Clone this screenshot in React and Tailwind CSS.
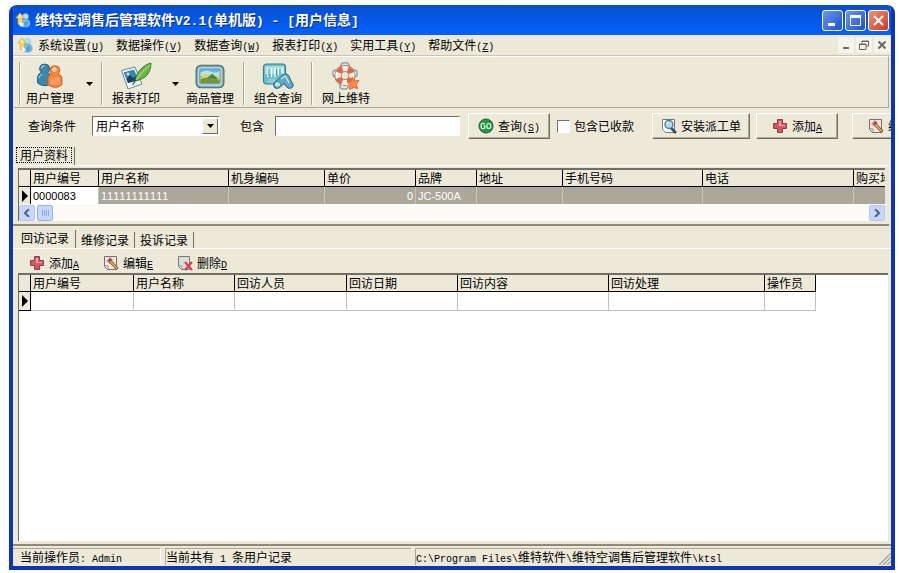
import { useState } from 'react';

const userColumns = [
    { title: '用户编号', width: 'w-[68px]' },
    { title: '用户名称', width: 'w-[130px]' },
    { title: '机身编码', width: 'w-[96px]' },
    { title: '单价', width: 'w-[91px]' },
    { title: '品牌', width: 'w-[61px]' },
    { title: '地址', width: 'w-[86px]' },
    { title: '手机号码', width: 'w-[140px]' },
    { title: '电话', width: 'w-[151px]' },
    { title: '购买地点', width: 'w-[96px]' },
];

const visitColumns = [
    { title: '用户编号', width: 'w-[103px]' },
    { title: '用户名称', width: 'w-[101px]' },
    { title: '回访人员', width: 'w-[112px]' },
    { title: '回访日期', width: 'w-[111px]' },
    { title: '回访内容', width: 'w-[151px]' },
    { title: '回访处理', width: 'w-[156px]' },
    { title: '操作员', width: 'w-[51px]' },
];

const menus = [
    ['系统设置', 'U'],
    ['数据操作', 'V'],
    ['数据查询', 'W'],
    ['报表打印', 'X'],
    ['实用工具', 'Y'],
    ['帮助文件', 'Z'],
];

// Half-width text, drawn smaller so two letters take one Chinese character
function Half({ children }) {
    return <span className="font-['Liberation_Mono',monospace] text-[10px] leading-none whitespace-pre">{children}</span>;
}

function Key({ children }) {
    return <Half><span className="underline underline-offset-1">{children}</span></Half>;
}

function AppIcon() {
    return (
        <svg viewBox="0 0 16 16" className="size-4 shrink-0" aria-hidden="true">
            <circle cx="10.500" cy="4.500" r="3" fill="#b4e0f8" stroke="#6db3dd" strokeWidth=".6" />
            <path d="M6.500 14V10q0-3 4-3t4.500 3v3l-2 2H8z" fill="#7cc0ee" stroke="#4b94cc" strokeWidth=".6" />
            <path d="M8 13q1-4 5-4v4l-2 1.500z" fill="#4fa3e0" />
            <path d="M5 1 .8 6H3v6l2 1.500L7.500 12V6h2z" fill="#f5d366" stroke="#d3a638" strokeWidth=".6" />
            <path d="M5 2.500 3 5.500h3.500z" fill="#fdf6c8" />
            <path d="M5 14.500V10l3.500 1.500v3z" fill="#e3f5fd" />
        </svg>
    );
}

function UsersIcon() {
    return (
        <svg viewBox="0 0 26 26" className="size-7" aria-hidden="true">
            <g stroke="#1e5878" strokeWidth=".9" strokeLinejoin="round">
                <path d="M5 9.500A4.300 4.300 0 0 1 3.500 5Q4 2 8 2t4.500 3q.3 3-1.500 4.500 2 1 2 4V20q-2 2-4 2-5 0-7.500-2.500V14q.5-3.500 3.500-4.500z" fill="#3a88ab" />
            </g>
            <path d="M5 6q0-2.500 3-2.500M3 15q0-3 3-3.500" stroke="#8cc3d8" strokeWidth="1.300" fill="none" />
            <g stroke="#c4561f" strokeWidth=".9" strokeLinejoin="round">
                <path d="M14.500 11Q12.500 9.500 13 7q.5-3.500 4.500-3.500T22 7q.3 2.500-1.500 4 3 1 3.500 4v6q-2 2.500-6 2.500t-7-2.500v-6q.5-3 3.500-4z" fill="#f9853f" />
            </g>
            <path d="M13 20q0-6 9.500-6v6.500q-4 3-9.500-.5z" fill="#ff9a58" />
            <circle cx="17" cy="7" r="2.300" fill="#ffc596" />
        </svg>
    );
}

function ReportIcon() {
    return (
        <svg viewBox="0 0 32 28" className="h-7 w-8" aria-hidden="true">
            <path d="M1.500 8.500 15 5l7 17L8 27z" fill="#f2f7fa" stroke="#6b8796" />
            <path d="M3.500 10.500 14 7.500l4.500 10.500L8 21z" fill="#3684bc" />
            <path d="m6.500 17 3.500-4 3 3 3-2 2.500 4L8 21z" fill="#1f3f5c" />
            <circle cx="8" cy="12" r="1.500" fill="#cde9f6" />
            <path d="M15 19q1-8 7-13 4-4 9-5 0 9-6 14-4 3-10 4z" fill="#6cb546" stroke="#2d7128" strokeWidth=".9" />
            <path d="M16 18q6-9 14-15" stroke="#c1e594" fill="none" />
            <path d="m16 18-3.500 5" stroke="#315c31" strokeWidth="1.200" />
        </svg>
    );
}

function PictureIcon() {
    return (
        <svg viewBox="0 0 28 26" className="h-7 w-[30px]" aria-hidden="true">
            <rect x="1" y="3" width="26" height="21" rx="4.500" fill="#7fa6ae" stroke="#3f6971" />
            <rect x="2.500" y="4.500" width="23" height="18" rx="3.500" fill="#b5cfd2" />
            <rect x="4.500" y="6.500" width="19" height="13.500" rx="1" fill="#65b8e0" stroke="#5d8890" strokeWidth=".6" />
            <path d="M5 10q5-3 10-1t8-1v5H5z" fill="#b9e3ed" />
            <path d="M5 15q4-5 8-3.500t10 1.500v6.500H5z" fill="#e0d160" />
            <path d="M5 16q5-2 8-1l10 1.500v3H5z" fill="#6c9a35" />
            <path d="m11 15 5-4 6 5z" fill="#4b8244" />
        </svg>
    );
}

function QueryIcon() {
    return (
        <svg viewBox="0 0 32 28" className="h-7 w-8" aria-hidden="true">
            <rect x="1.500" y="2" width="22" height="20" rx="3" fill="#6fbfcc" stroke="#347f91" strokeWidth="1.200" />
            <path d="M3 4h19v8H3z" fill="#a6dce2" />
            <path d="M6 6v9M9.500 6v9M13 6v9M16.500 6v7M20 6v5" stroke="#f2ffff" strokeWidth="1.300" />
            <path d="M7 7v7M14.500 7v6M18 7v5" stroke="#4597a6" />
            <path d="M6 18h7M6 20h6" stroke="#a9dce2" />
            <path d="m12 21 9-8q3-2 5 0 2 1 2 4l3 5q1 3-1.500 4-3 1-5-1l-2.500-3.500-4 4q-3 1.500-5 .5-2-1.500-1-5z" fill="#60a8c6" stroke="#28657e" />
            <ellipse cx="15.500" cy="22.500" rx="3.200" ry="3" fill="#b8e6f0" stroke="#367d98" />
            <path d="m19 17 4-3 2 3 2 4" stroke="#c6eef4" fill="none" strokeWidth="1.300" />
        </svg>
    );
}

function BuoyIcon() {
    return (
        <svg viewBox="0 0 28 28" className="size-7" aria-hidden="true">
            <g fill="none" stroke="#8ba6b4" strokeWidth="1.500">
                <rect x="9" y=".8" width="8" height="6" rx="3" />
                <rect x="20" y="8" width="5" height="7" rx="2.500" />
                <rect x="1" y="8" width="5" height="7" rx="2.500" />
                <rect x="8" y="21" width="8" height="6" rx="3" />
            </g>
            <circle cx="13" cy="13.500" r="7" fill="none" stroke="#b2573c" strokeWidth="7" />
            <circle cx="13" cy="13.500" r="7" fill="none" stroke="#f7f1ea" strokeWidth="5.600" />
            <circle cx="13" cy="13.500" r="7" fill="none" stroke="#de6a45" strokeWidth="5.600" strokeDasharray="5.500 5.496" strokeDashoffset="-2.750" />
            <path d="m20.500 15 1.500 4 5-.5-3 4 2 4-4.500-1-4 2 .5-4.500-3-3 4.500-.5z" fill="#ff8a50" stroke="#e8682c" strokeLinejoin="round" />
        </svg>
    );
}

function PlusIcon() {
    return (
        <svg viewBox="0 0 16 16" className="size-4 shrink-0" aria-hidden="true">
            <path d="M5.500 1.500h5v4h4v5h-4v4h-5v-4h-4v-5h4z" fill="#d95661" stroke="#84434c" strokeLinejoin="round" />
            <path d="M7 3h2v4h4v1H7z" fill="#f4a2a5" />
        </svg>
    );
}

function EditIcon() {
    return (
        <svg viewBox="0 0 16 16" className="size-4 shrink-0" aria-hidden="true">
            <path d="M1.500 1.500h12v13h-9l-3-3z" fill="#f5e5e1" stroke="#75706f" />
            <path d="M2 11h3v3" fill="#fff" stroke="#75706f" strokeWidth=".8" />
            <path d="m3 6 4-4 3 3-3 4z" fill="#e6929a" />
            <path d="m7 6 7.500 8" stroke="#6d4420" strokeWidth="3" />
            <path d="m7 6 7 7.500" stroke="#f0b64b" strokeWidth="1.600" />
            <path d="m5 6 2-3 2 2-3 2z" fill="#943e42" />
        </svg>
    );
}

function DeleteIcon() {
    return (
        <svg viewBox="0 0 16 16" className="size-4 shrink-0" aria-hidden="true">
            <path d="M1.500 1.500h11v13h-8l-3-3z" fill="#d6dfda" stroke="#717b76" />
            <path d="M2 11h3v3" fill="#fff" stroke="#717b76" strokeWidth=".8" />
            <path d="m8 7 7 8m0-8-7 8" stroke="#df3848" strokeWidth="2" />
        </svg>
    );
}

function LensIcon() {
    return (
        <svg viewBox="0 0 16 16" className="size-4 shrink-0" aria-hidden="true">
            <path d="M1.500 1.500h12v13h-9l-3-3z" fill="#fff" stroke="#777" />
            <path d="m10 10 5 5" stroke="#344e61" strokeWidth="2.500" />
            <circle cx="8" cy="6.500" r="4" fill="#a8dcf3" stroke="#4c7794" strokeWidth="1.300" />
            <path d="M6 6q0-2 2-2" stroke="#fff" fill="none" />
        </svg>
    );
}

function GoIcon() {
    return (
        <svg viewBox="0 0 16 16" className="size-4 shrink-0" aria-hidden="true">
            <circle cx="8" cy="8" r="7" fill="#279348" stroke="#155e2d" />
            <path d="M7 6Q3 4 3 8t4 2V8H5.500" stroke="#d9ffe0" fill="none" strokeWidth="1.200" />
            <ellipse cx="10.800" cy="8" rx="2" ry="2.500" stroke="#d9ffe0" fill="none" strokeWidth="1.200" />
        </svg>
    );
}

function DownArrow() {
    return (
        <svg viewBox="0 0 7 4" className="h-1 w-[7px]" aria-hidden="true">
            <path d="M0 0h7L3.500 4z" fill="#000" />
        </svg>
    );
}

function RowMark() {
    return (
        <svg viewBox="0 0 6 12" className="mx-auto h-3 w-1.5" aria-label="当前行">
            <path d="M0 0 6 6 0 12z" fill="#000" />
        </svg>
    );
}

function ToolButton({ icon, label, arrow }) {
    return (
        <div className="flex">
            <button className="flex w-[66px] flex-col items-center justify-end leading-4">
                {icon}
                <span>{label}</span>
            </button>
            {arrow && (
                <button aria-label={label + '选项'} className="flex w-3 items-center justify-center">
                    <DownArrow />
                </button>
            )}
        </div>
    );
}

function Divider() {
    return <div className="my-px w-0.5 shrink-0 border-l border-[#aca899] border-r border-r-white" />;
}

function RaisedButton({ children, className }) {
    return (
        <button className={`flex h-[26px] shrink-0 items-center justify-center gap-1 border border-t-white border-l-white border-r-[#716f64] border-b-[#716f64] bg-[#ece9d8] shadow-[inset_-1px_-1px_0_#aca899] ${className}`}>
            {children}
        </button>
    );
}

function FlatButton({ icon, label, hotkey }) {
    return (
        <button className="flex items-center gap-1">
            {icon}
            <span>{label}<Key>{hotkey}</Key></span>
        </button>
    );
}

function HeaderRow({ columns }) {
    return (
        <thead>
            <tr className="h-[17px]">
                <th className="w-3 border-r border-b border-black bg-[#ece9d8]" />
                {columns.map((col) => (
                    <th key={col.title} className={`${col.width} overflow-hidden border-r border-b border-black bg-[#ece9d8] pl-0.5 text-left font-normal whitespace-nowrap`}>
                        {col.title}
                    </th>
                ))}
            </tr>
        </thead>
    );
}

function UserTable() {
    const cells = ['0000083', '11111111111', '', '0', 'JC-500A', '', '', '', ''];
    return (
        <div className="mr-1 ml-[5px] border-t-2 border-l border-[#716f64] bg-white">
            <div className="overflow-hidden">
                <table className="w-[931px] table-fixed border-separate border-spacing-0 leading-4">
                    <HeaderRow columns={userColumns} />
                    <tbody>
                        <tr className="h-[17px]">
                            <td className="border-r border-black bg-[#ece9d8]"><RowMark /></td>
                            {cells.map((value, i) => (
                                <td key={i} className={`border-r border-[#c8c5b8] px-0.5 font-['Liberation_Sans',sans-serif] text-[11px] [font-kerning:none] ${i === 0 ? 'bg-white' : 'bg-[#aca899] text-white'} ${i === 3 ? 'text-right' : ''}`}>
                                    {value}
                                </td>
                            ))}
                        </tr>
                    </tbody>
                </table>
            </div>
            <div className="flex h-[17px] items-center justify-between bg-[#fbfaf7]">
                <div className="flex gap-0.5">
                    <button aria-label="向左" className="flex h-4 w-4 items-center justify-center rounded-xs border border-[#b4c8f6] bg-[#c6d6fc]">
                        <svg viewBox="0 0 8 8" className="size-2"><path d="M6 0 2 4l4 4" stroke="#4d6185" strokeWidth="2" fill="none" /></svg>
                    </button>
                    <div className="flex h-4 w-4 items-center justify-center gap-px rounded-xs border border-[#98b2ec] bg-[#c6d6fc]">
                        <i className="h-1.5 w-px bg-[#8cabe8]" />
                        <i className="h-1.5 w-px bg-[#8cabe8]" />
                        <i className="h-1.5 w-px bg-[#8cabe8]" />
                        <i className="h-1.5 w-px bg-[#8cabe8]" />
                    </div>
                </div>
                <button aria-label="向右" className="flex h-4 w-4 items-center justify-center rounded-xs border border-[#b4c8f6] bg-[#c6d6fc]">
                    <svg viewBox="0 0 8 8" className="size-2"><path d="m2 0 4 4-4 4" stroke="#4d6185" strokeWidth="2" fill="none" /></svg>
                </button>
            </div>
        </div>
    );
}

function VisitTable() {
    return (
        <div className="mr-[3px] ml-[5px] flex-1 overflow-hidden border-t-2 border-l border-[#716f64] bg-white">
            <table className="w-[797px] table-fixed border-separate border-spacing-0 leading-4">
                <HeaderRow columns={visitColumns} />
                <tbody>
                    <tr className="h-[19px]">
                        <td className="border-r border-b border-black bg-[#ece9d8]"><RowMark /></td>
                        {visitColumns.map((col) => (
                            <td key={col.title} className="border-r border-b border-[#c0c0c0]" />
                        ))}
                    </tr>
                </tbody>
            </table>
        </div>
    );
}

function TitleHalf({ children }) {
    return <span className="font-['Liberation_Mono',monospace] text-[13px] whitespace-pre">{children}</span>;
}

function TitleBar() {
    const box = 'flex size-[21px] items-center justify-center rounded-[3px] border border-white';
    return (
        <header className="flex h-[30px] items-center bg-linear-to-b from-[#0a4fc8] via-[#0558e8] to-[#0562fb] pr-0.5 pl-0.5 text-white">
            <AppIcon />
            <h1 className="ml-1 flex-1 text-[14px] font-bold whitespace-nowrap [text-shadow:1px_1px_#0a2f80]">
                维特空调售后管理软件<TitleHalf>V2.1(</TitleHalf>单机版<TitleHalf>{') - ['}</TitleHalf>用户信息<TitleHalf>]</TitleHalf>
            </h1>
            <div className="flex gap-0.5">
                <button aria-label="最小化" className={`${box} bg-linear-to-br from-[#6d95f0] to-[#1e4fd0]`}>
                    <svg viewBox="0 0 13 13" className="size-[13px]"><path d="M2 9h7v3H2z" fill="#fff" /></svg>
                </button>
                <button aria-label="最大化" className={`${box} bg-linear-to-br from-[#6d95f0] to-[#1e4fd0]`}>
                    <svg viewBox="0 0 13 13" className="size-[13px]"><path d="M1.500 2v9.500h10V2zM1 2.500h11" stroke="#fff" fill="none" /><path d="M1 1h11v3H1z" fill="#fff" /></svg>
                </button>
                <button aria-label="关闭" className={`${box} bg-linear-to-br from-[#ee9272] to-[#c8381a]`}>
                    <svg viewBox="0 0 13 13" className="size-[13px]"><path d="m2 2 9 9m0-9-9 9" stroke="#fff" strokeWidth="2" /></svg>
                </button>
            </div>
        </header>
    );
}

function MenuBar() {
    return (
        <nav className="flex h-[21px] items-center border-b border-[#c9c5b2] pl-1">
            <AppIcon />
            <div className="ml-[5px] flex flex-1 gap-3">
                {menus.map(([label, key]) => (
                    <button key={key} className="whitespace-nowrap">
                        {label}<Half>(</Half><Key>{key}</Key><Half>)</Half>
                    </button>
                ))}
            </div>
            <div className="flex gap-0.5 pr-px">
                <button aria-label="最小化子窗口" className="flex size-4 items-center justify-center bg-[#f4f3ec]">
                    <svg viewBox="0 0 10 10" className="size-2.5"><path d="M2 7h6v2H2z" fill="#6b6960" /></svg>
                </button>
                <button aria-label="还原子窗口" className="flex size-4 items-center justify-center bg-[#f4f3ec]">
                    <svg viewBox="0 0 10 10" className="size-2.5"><path d="M3 3V1h6.500v5H7M3 1.500h6M.5 4v5.500H7V4zM.5 4.500H7" stroke="#6b6960" fill="none" /></svg>
                </button>
                <button aria-label="关闭子窗口" className="flex size-4 items-center justify-center bg-[#f4f3ec]">
                    <svg viewBox="0 0 10 10" className="size-2.5"><path d="m1.500 1.500 7 7m0-7-7 7" stroke="#6b6960" strokeWidth="2" /></svg>
                </button>
            </div>
        </nav>
    );
}

function ToolBar() {
    return (
        <div className="mr-0.5 ml-px flex h-[52px] border-t border-r border-b border-t-white border-r-[#aca899] border-b-[#aca899] pt-1 pb-px pl-[5px]">
            <Divider />
            <div className="-ml-1 flex pr-1.5"><ToolButton icon={<UsersIcon />} label="用户管理" arrow /></div>
            <Divider />
            <ToolButton icon={<ReportIcon />} label="报表打印" arrow />
            <div className="-ml-1 flex"><ToolButton icon={<PictureIcon />} label="商品管理" /></div>
            <Divider />
            <ToolButton icon={<QueryIcon />} label="组合查询" />
            <Divider />
            <ToolButton icon={<BuoyIcon />} label="网上维特" />
        </div>
    );
}

function FilterBar() {
    const [field, setField] = useState('用户名称');
    const [keyword, setKeyword] = useState('');
    const [paid, setPaid] = useState(false);
    const sunken = 'h-5 border border-t-[#716f64] border-l-[#716f64] border-r-white border-b-white bg-white';

    return (
        <form onSubmit={(e) => e.preventDefault()} className="flex items-center overflow-hidden pt-[5px] pl-[15px] whitespace-nowrap">
            <label htmlFor="field" className="w-16 shrink-0">查询条件</label>
            <div className="relative shrink-0">
                <select
                    id="field"
                    value={field}
                    onChange={(e) => setField(e.target.value)}
                    className={`${sunken} w-32 appearance-none pl-[3px] leading-4 outline-none`}
                >
                    <option>用户名称</option>
                    <option>用户编号</option>
                </select>
                <span className="pointer-events-none absolute inset-y-0.5 right-0.5 flex w-4 items-center justify-center border border-t-white border-l-white border-r-[#716f64] border-b-[#716f64] bg-[#ece9d8]">
                    <DownArrow />
                </span>
            </div>
            <label htmlFor="keyword" className="ml-5 w-[35px] shrink-0">包含</label>
            <input
                id="keyword"
                type="text"
                value={keyword}
                onChange={(e) => setKeyword(e.target.value)}
                className={`${sunken} w-[185px] shrink-0 px-1 outline-none`}
            />
            <RaisedButton className="ml-2 w-[82px]">
                <GoIcon />
                <span>查询<Half>(</Half><Key>S</Key><Half>)</Half></span>
            </RaisedButton>
            <label className="ml-[7px] flex w-[95px] shrink-0 items-center gap-1">
                <input
                    type="checkbox"
                    checked={paid}
                    onChange={(e) => setPaid(e.target.checked)}
                    className="size-[13px] appearance-none border border-t-[#716f64] border-l-[#716f64] border-r-white border-b-white bg-white checked:bg-[#4d6185]"
                />
                包含已收款
            </label>
            <RaisedButton className="w-[98px]"><LensIcon /><span>安装派工单</span></RaisedButton>
            <RaisedButton className="ml-1.5 w-[82px]"><PlusIcon /><span>添加<Key>A</Key></span></RaisedButton>
            <RaisedButton className="ml-3.5 w-[82px]"><EditIcon /><span>编辑<Key>E</Key></span></RaisedButton>
        </form>
    );
}

function App() {
    const [tab, setTab] = useState('回访记录');

    return (
        <div className="flex min-h-screen flex-col bg-white pt-[5px] pr-1 pb-[3px] pl-[9px] font-['Noto_Sans_CJK_SC',sans-serif] text-[12px] leading-4 text-black">
            <div className="flex flex-1 flex-col overflow-hidden rounded-t-lg border-x-4 border-b-4 border-[#0b36b4] bg-[#ece9d8]">
                <TitleBar />
                <MenuBar />
                <ToolBar />
                <FilterBar />

                <section className="mr-0.5 border-b-2 border-[#8d8a7c] pt-2 pb-[3px]">
                    <div className="mb-0.5 flex border-b border-white pl-[3px]">
                        <button className="mb-0.5 border border-dotted border-black px-[3px] leading-[14px]">用户资料</button>
                        <span className="ml-0.5 w-px bg-[#716f64]" />
                    </div>
                    <UserTable />
                </section>

                <main className="flex flex-1 flex-col pb-[3px]">
                    <div className="flex border-b border-white pt-1">
                        {['回访记录', '维修记录', '投诉记录'].map((name) => (
                            <button
                                key={name}
                                onClick={() => setTab(name)}
                                className={`border-r border-[#716f64] leading-4 ${tab === name ? 'pr-1.5 pb-0.5 pl-2' : 'mt-0.5 px-[5px]'}`}
                            >
                                {name}
                            </button>
                        ))}
                    </div>
                    <div className="flex gap-6 px-4 pt-1.5 pb-0.5">
                        <FlatButton icon={<PlusIcon />} label="添加" hotkey="A" />
                        <FlatButton icon={<EditIcon />} label="编辑" hotkey="E" />
                        <FlatButton icon={<DeleteIcon />} label="删除" hotkey="D" />
                    </div>
                    <VisitTable />
                </main>

                <footer className="flex gap-1 border-t-2 border-[#8d8a7c] pt-0.5 pb-px whitespace-nowrap">
                    <div className="w-[148px] border-t border-r border-t-[#aca899] border-r-white pl-[7px]">
                        当前操作员<Half>: Admin</Half>
                    </div>
                    <div className="w-[246px] border-t border-l border-[#aca899]">
                        当前共有<Half> 1 </Half>条用户记录
                    </div>
                    <div className="flex flex-1 items-end justify-between border-t border-l border-[#aca899]">
                        <span><Half>{'C:\\Program Files\\'}</Half>维特软件<Half>\</Half>维特空调售后管理软件<Half>{'\\ktsl'}</Half></span>
                        <svg viewBox="0 0 12 12" className="size-3" aria-hidden="true">
                            <path d="M0 12 12 0M4 12l8-8M8 12l4-4" stroke="#aca899" strokeWidth="1.500" />
                        </svg>
                    </div>
                </footer>
            </div>
        </div>
    );
}

export default App;
